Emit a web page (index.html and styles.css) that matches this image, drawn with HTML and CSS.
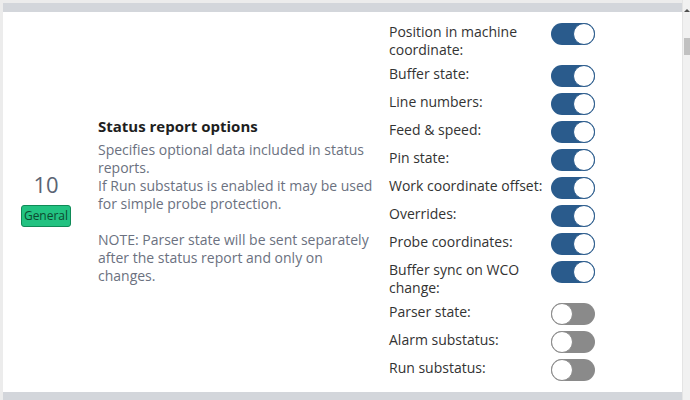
FILE: index.html
```html
<!DOCTYPE html>
<html>
<head>
<meta charset="utf-8">
<link rel="stylesheet" href="styles.css">
</head>
<body>
<div class="page">
  <div class="main">
    <div class="band band-top"></div>
    <div class="card">
      <div class="idcol">
        <div class="num">10</div>
        <div class="badge">General</div>
      </div>
      <div class="desc">
        <div class="title">Status report options</div>
        <div class="text">Specifies optional data included in status reports.<br>If Run substatus is enabled it may be used for simple probe protection.<br><br>NOTE: Parser state will be sent separately after the status report and only on changes.</div>
      </div>
      <div class="opts">
        <div class="row"><span class="lbl">Position in machine coordinate:</span><span class="tog on"></span></div>
        <div class="row"><span class="lbl">Buffer state:</span><span class="tog on"></span></div>
        <div class="row"><span class="lbl">Line numbers:</span><span class="tog on"></span></div>
        <div class="row"><span class="lbl">Feed &amp; speed:</span><span class="tog on"></span></div>
        <div class="row"><span class="lbl">Pin state:</span><span class="tog on"></span></div>
        <div class="row"><span class="lbl">Work coordinate offset:</span><span class="tog on"></span></div>
        <div class="row"><span class="lbl">Overrides:</span><span class="tog on"></span></div>
        <div class="row"><span class="lbl">Probe coordinates:</span><span class="tog on"></span></div>
        <div class="row"><span class="lbl">Buffer sync on WCO change:</span><span class="tog on"></span></div>
        <div class="row"><span class="lbl">Parser state:</span><span class="tog"></span></div>
        <div class="row"><span class="lbl">Alarm substatus:</span><span class="tog"></span></div>
        <div class="row"><span class="lbl">Run substatus:</span><span class="tog"></span></div>
      </div>
    </div>
    <div class="band band-bottom"></div>
  </div>
  <div class="scrollbar">
    <div class="arrow"></div>
    <div class="thumb"></div>
  </div>
</div>
</body>
</html>
```
FILE: styles.css
```css
html, body {
  margin: 0;
  padding: 0;
}
body {
  background: #ececec;
  font-family: "Open Sans", "Noto Sans", sans-serif;
  width: 690px;
  height: 400px;
  overflow: hidden;
}
.page {
  display: flex;
  height: 400px;
  padding-top: 3px;
  padding-left: 3px;
  box-sizing: border-box;
}
.main {
  width: 680px;
  display: flex;
  flex-direction: column;
}
.band {
  background: #d3d6db;
}
.band-top {
  height: 9px;
}
.band-bottom {
  height: 8px;
}
.card {
  background: #fff;
  height: 380px;
  flex: none;
  display: flex;
  align-items: center;
  box-sizing: border-box;
}
.idcol {
  width: 86px;
  display: flex;
  flex-direction: column;
  align-items: center;
  margin-bottom: 6px;
}
.num {
  font-size: 22px;
  line-height: 26px;
  color: #5a6474;
}
.badge {
  margin-top: 8px;
  width: 50px;
  height: 22px;
  box-sizing: border-box;
  background: #22c281;
  border: 1px solid #0f8a57;
  border-radius: 3px;
  font-size: 12px;
  line-height: 20px;
  text-align: center;
  color: #0d4a30;
}
.desc {
  width: 280px;
  margin-left: 9px;
  margin-bottom: 3px;
}
.title {
  font-weight: 700;
  font-size: 15px;
  line-height: 20px;
  color: #1e1e1e;
  margin-bottom: 5px;
}
.text {
  font-size: 14px;
  line-height: 18px;
  color: #6b7180;
}
.opts {
  margin-left: 11px;
  display: flex;
  flex-direction: column;
  gap: 6px;
}
.row {
  display: flex;
  align-items: flex-start;
}
.lbl {
  width: 162px;
  font-size: 14px;
  line-height: 18px;
  color: #333;
}
.tog {
  position: relative;
  width: 44px;
  height: 22px;
  border-radius: 11px;
  background: #8a8a8a;
  flex: none;
}
.tog.on {
  background: #2a5b8c;
}
.tog::after {
  content: "";
  position: absolute;
  top: 0;
  left: 0;
  width: 22px;
  height: 22px;
  box-sizing: border-box;
  border-radius: 50%;
  background: #fff;
  border: 1px solid #8a8a8a;
}
.tog.on::after {
  left: 22px;
  border-color: #2a5b8c;
}
.scrollbar {
  width: 7px;
  background: #f1f1f1;
  margin-top: -3px;
  border-left: 1px solid #e4e4e4;
  position: relative;
}
.arrow {
  margin: 9px 0 0 1px;
  width: 0;
  height: 0;
  border-left: 3px solid transparent;
  border-right: 3px solid transparent;
  border-bottom: 3px solid #505050;
}
.thumb {
  margin-top: 26px;
  margin-left: 1px;
  width: 6px;
  height: 17px;
  background: #c1c1c1;
}
```
